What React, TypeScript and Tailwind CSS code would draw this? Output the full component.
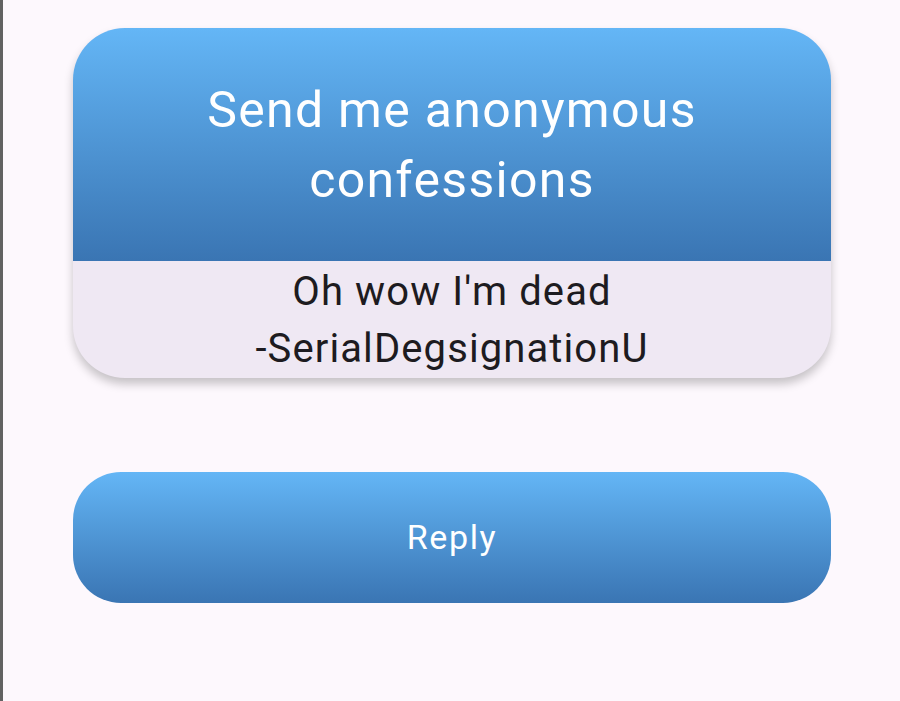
export default function App() {
  return (
    <main
      className="flex h-[701px] w-[900px] bg-[#fdf8fd]"
      style={{ fontFamily: "Roboto, 'Noto Sans', sans-serif" }}
    >
      {/* left window edge */}
      <div className="w-[3px] h-full bg-[#626262]" />
      <div className="flex flex-col pl-[70px] pt-[28px] w-[831px]">
        {/* message card */}
        <div className="w-[758px] rounded-[52px] overflow-hidden bg-[#efe8f3] shadow-[0_6px_10px_rgba(0,0,0,0.22)]">
          <div className="h-[233px] flex items-center justify-center px-10 bg-gradient-to-b from-[#64b6f6] to-[#3a75b3]">
            <h1 className="text-center text-white text-[50px] leading-[70px] tracking-[1.3px]">
              Send me anonymous
              <br />
              confessions
            </h1>
          </div>
          <div className="h-[117px] flex flex-col items-center justify-center text-[#1d1b20] text-[40px] leading-[57px] tracking-[1.1px]">
            <p>Oh wow I'm dead</p>
            <p>-SerialDegsignationU</p>
          </div>
        </div>

        {/* reply button */}
        <button className="mt-[94px] w-[758px] h-[131px] rounded-[48px] bg-gradient-to-b from-[#64b6f6] to-[#3a75b3] text-white text-[34px] tracking-[1.6px]">
          Reply
        </button>
      </div>
    </main>
  );
}
